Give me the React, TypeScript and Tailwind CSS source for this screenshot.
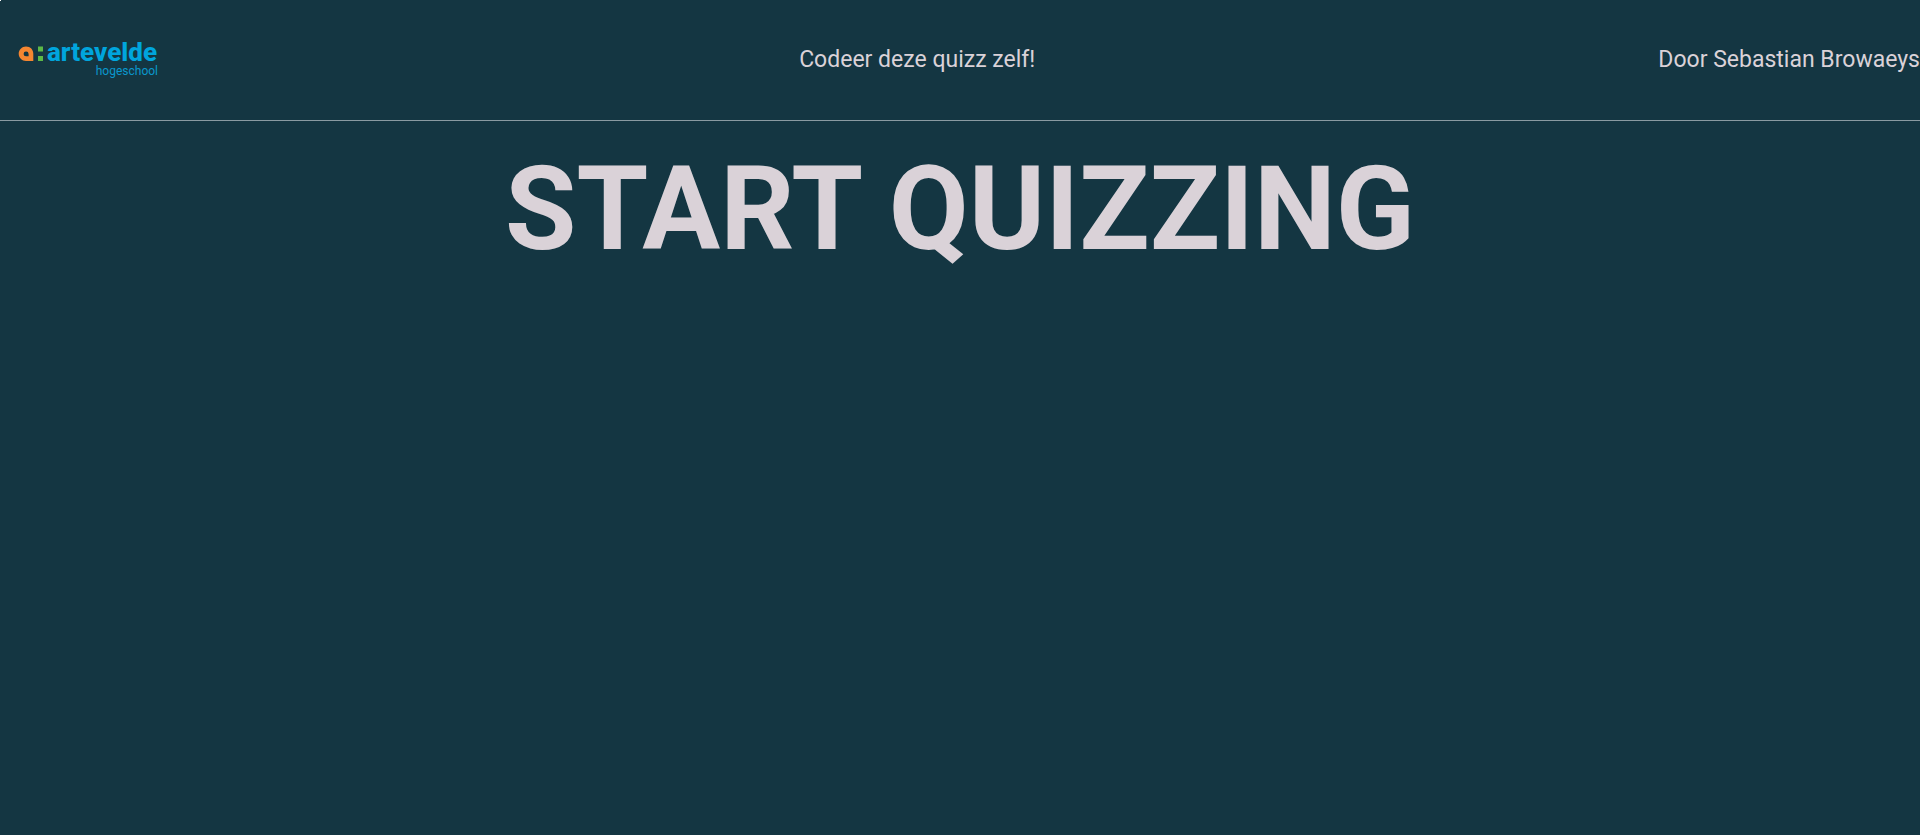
export default function App() {
  return (
    <div className="flex min-h-screen flex-col bg-[#143642] font-[Roboto,sans-serif] text-[#dad2d8]">
      <span aria-hidden="true" className="absolute top-0 left-0 h-px w-px bg-white" />
      <header className="flex h-[121px] items-center justify-between border-b border-[#8a9ba2] pb-px text-[23px] leading-[31px]">
        <a href="#" aria-label="Arteveldehogeschool" className="ml-4">
          <svg width="160" height="49" viewBox="0 0 160 49" aria-hidden="true">
            <path
              fill="#f58631"
              fillRule="evenodd"
              d="M10 11.5C14.5 11.5 17.3 14.7 17.3 18.8V26H10C5.9 26 2.7 22.8 2.7 18.8S5.9 11.5 10 11.5ZM10 16.5A2.4 2.4 0 0 0 10 21.3H12.6V18.9A2.5 2.5 0 0 0 10 16.5Z"
            />
            <path fill="#5cb947" d="M22 11.5h5v5h-5zM22 21h5v5h-5z" />
            <text x="31" y="26" fill="#00a5dd" fontFamily="Roboto, sans-serif" fontSize="26" fontWeight="800">
              artevelde
            </text>
            <text x="142" y="40" fill="#0a98cd" fontFamily="Roboto, sans-serif" fontSize="12" textAnchor="end">
              hogeschool
            </text>
          </svg>
        </a>
        <p>Codeer deze quizz zelf!</p>
        <p>Door Sebastian Browaeys</p>
      </header>
      <main className="flex justify-center pt-5">
        <h1 className="text-[116px] leading-[137px] font-bold">START QUIZZING</h1>
      </main>
    </div>
  );
}
